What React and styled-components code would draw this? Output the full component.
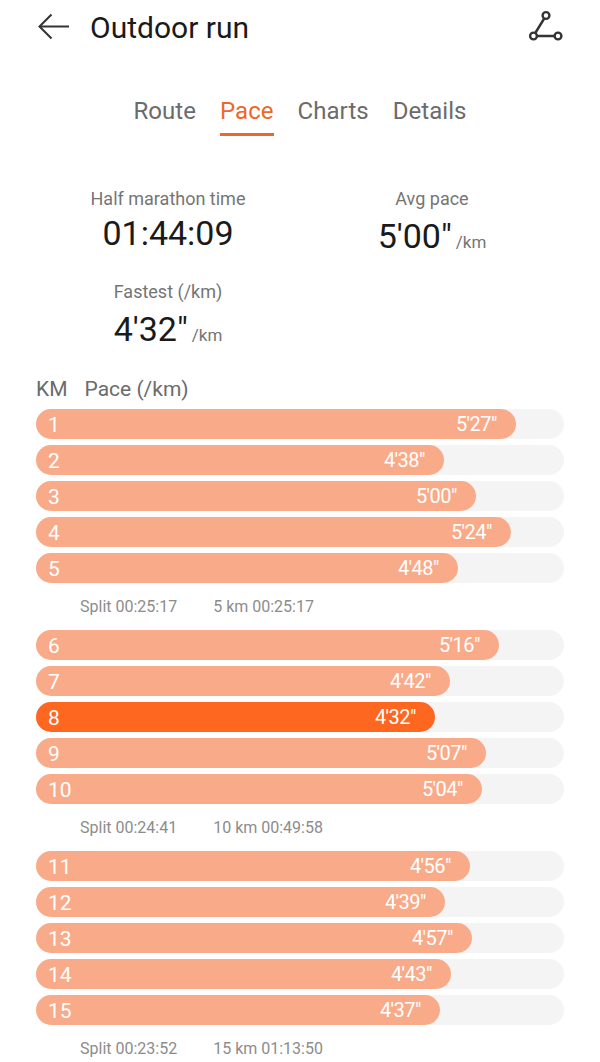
import React from "react";
import styled, { createGlobalStyle } from "styled-components";

const GlobalStyle = createGlobalStyle`
  html, body {
    margin: 0;
    padding: 0;
    background: #fff;
    font-family: Roboto, "Liberation Sans", sans-serif;
  }
`;

const Page = styled.div`
  width: 600px;
  height: 1062px;
  overflow: hidden;
  padding: 0 36px;
  box-sizing: border-box;
`;

const TopBar = styled.header`
  display: flex;
  align-items: center;
  height: 54px;
`;

const BackIcon = styled.svg`
  width: 34px;
  height: 28px;
  margin-right: 20px;
  flex-shrink: 0;
`;

const Title = styled.h1`
  flex: 1;
  margin: 0;
  font-size: 30px;
  font-weight: 400;
  color: #1a1a1a;
`;

const RouteIcon = styled.svg`
  width: 36px;
  height: 36px;
`;

const Tabs = styled.nav`
  display: flex;
  justify-content: center;
  gap: 24px;
  margin-top: 41px;
`;

const Tab = styled.div`
  font-size: 24px;
  line-height: 32px;
  letter-spacing: 0.05px;
  padding-bottom: 6px;
  color: ${(p) => (p.$active ? "#f0662a" : "#6b6b6b")};
  border-bottom: 3px solid ${(p) => (p.$active ? "#f0662a" : "transparent")};
`;

const Stats = styled.section`
  display: grid;
  grid-template-columns: 1fr 1fr;
  row-gap: 16px;
  margin-top: 51px;
`;

const Stat = styled.div`
  text-align: center;
`;

const StatLabel = styled.div`
  font-size: 18px;
  line-height: 24px;
  color: #757575;
`;

const StatValue = styled.div`
  font-size: 34px;
  line-height: 44px;
  color: #1a1a1a;
  margin-top: ${(p) => (p.$plain ? "0" : "3px")};
`;

const Unit = styled.span`
  font-size: 17px;
  color: #757575;
  margin-left: 4px;
`;

const ListHead = styled.div`
  display: flex;
  gap: 17px;
  margin-top: 19px;
  font-size: 21px;
  line-height: 26px;
  color: #6b6b6b;
`;

const Group = styled.section`
  display: flex;
  flex-direction: column;
  gap: 6px;
  margin-top: 7px;
`;

const Track = styled.div`
  height: 30px;
  border-radius: 15px;
  background: #f4f4f5;
`;

const Fill = styled.div`
  display: flex;
  align-items: center;
  justify-content: space-between;
  height: 100%;
  padding: 0 19px 0 12px;
  box-sizing: border-box;
  border-radius: 15px;
  color: #fff;
  background: ${(p) => (p.$fast ? "#fd671f" : "#f9ab89")};
`;

const KmNumber = styled.span`
  font-size: 21px;
  padding-top: 2px;
`;

const PaceValue = styled.span`
  font-size: 20px;
  letter-spacing: -0.5px;
`;

const SplitRow = styled.div`
  display: flex;
  gap: 36px;
  height: 40px;
  padding: 14px 0 0 44px;
  box-sizing: border-box;
  font-size: 16px;
  line-height: 19px;
  color: #8c8c8c;
`;

const groups = [
  {
    rows: [
      [1, "5'27\"", 480],
      [2, "4'38\"", 408],
      [3, "5'00\"", 440],
      [4, "5'24\"", 475],
      [5, "4'48\"", 422],
    ],
    split: "Split 00:25:17",
    total: "5 km 00:25:17",
  },
  {
    rows: [
      [6, "5'16\"", 463],
      [7, "4'42\"", 414],
      [8, "4'32\"", 399, true],
      [9, "5'07\"", 450],
      [10, "5'04\"", 446],
    ],
    split: "Split 00:24:41",
    total: "10 km 00:49:58",
  },
  {
    rows: [
      [11, "4'56\"", 434],
      [12, "4'39\"", 409],
      [13, "4'57\"", 436],
      [14, "4'43\"", 415],
      [15, "4'37\"", 404],
    ],
    split: "Split 00:23:52",
    total: "15 km 01:13:50",
  },
];

export default function App() {
  return (
    <Page>
      <GlobalStyle />
      <TopBar>
        <BackIcon viewBox="0 0 34 28" fill="none" stroke="#333" strokeWidth="2">
          <path d="M33 13.5H4" />
          <path d="M15.5 1.5L3.5 13.5L15.5 25.5" />
        </BackIcon>
        <Title>Outdoor run</Title>
        <RouteIcon viewBox="0 0 36 36" fill="none" stroke="#333" strokeWidth="2.4">
          <circle cx="18" cy="6.5" r="3.4" />
          <circle cx="5.5" cy="27" r="3.4" />
          <circle cx="30" cy="27" r="3.4" />
          <path d="M16.2 9.5L7.3 24M9 27H26.5" />
        </RouteIcon>
      </TopBar>
      <Tabs>
        <Tab>Route</Tab>
        <Tab $active>Pace</Tab>
        <Tab>Charts</Tab>
        <Tab>Details</Tab>
      </Tabs>
      <Stats>
        <Stat>
          <StatLabel>Half marathon time</StatLabel>
          <StatValue $plain>01:44:09</StatValue>
        </Stat>
        <Stat>
          <StatLabel>Avg pace</StatLabel>
          <StatValue>
            5'00"<Unit>/km</Unit>
          </StatValue>
        </Stat>
        <Stat>
          <StatLabel>Fastest (/km)</StatLabel>
          <StatValue>
            4'32"<Unit>/km</Unit>
          </StatValue>
        </Stat>
      </Stats>
      <ListHead>
        <span>KM</span>
        <span>Pace (/km)</span>
      </ListHead>
      {groups.map((group) => (
        <div key={group.total}>
          <Group>
            {group.rows.map(([km, pace, width, fast]) => (
              <Track key={km}>
                <Fill $fast={fast} style={{ width }}>
                  <KmNumber>{km}</KmNumber>
                  <PaceValue>{pace}</PaceValue>
                </Fill>
              </Track>
            ))}
          </Group>
          <SplitRow>
            <span>{group.split}</span>
            <span>{group.total}</span>
          </SplitRow>
        </div>
      ))}
    </Page>
  );
}
